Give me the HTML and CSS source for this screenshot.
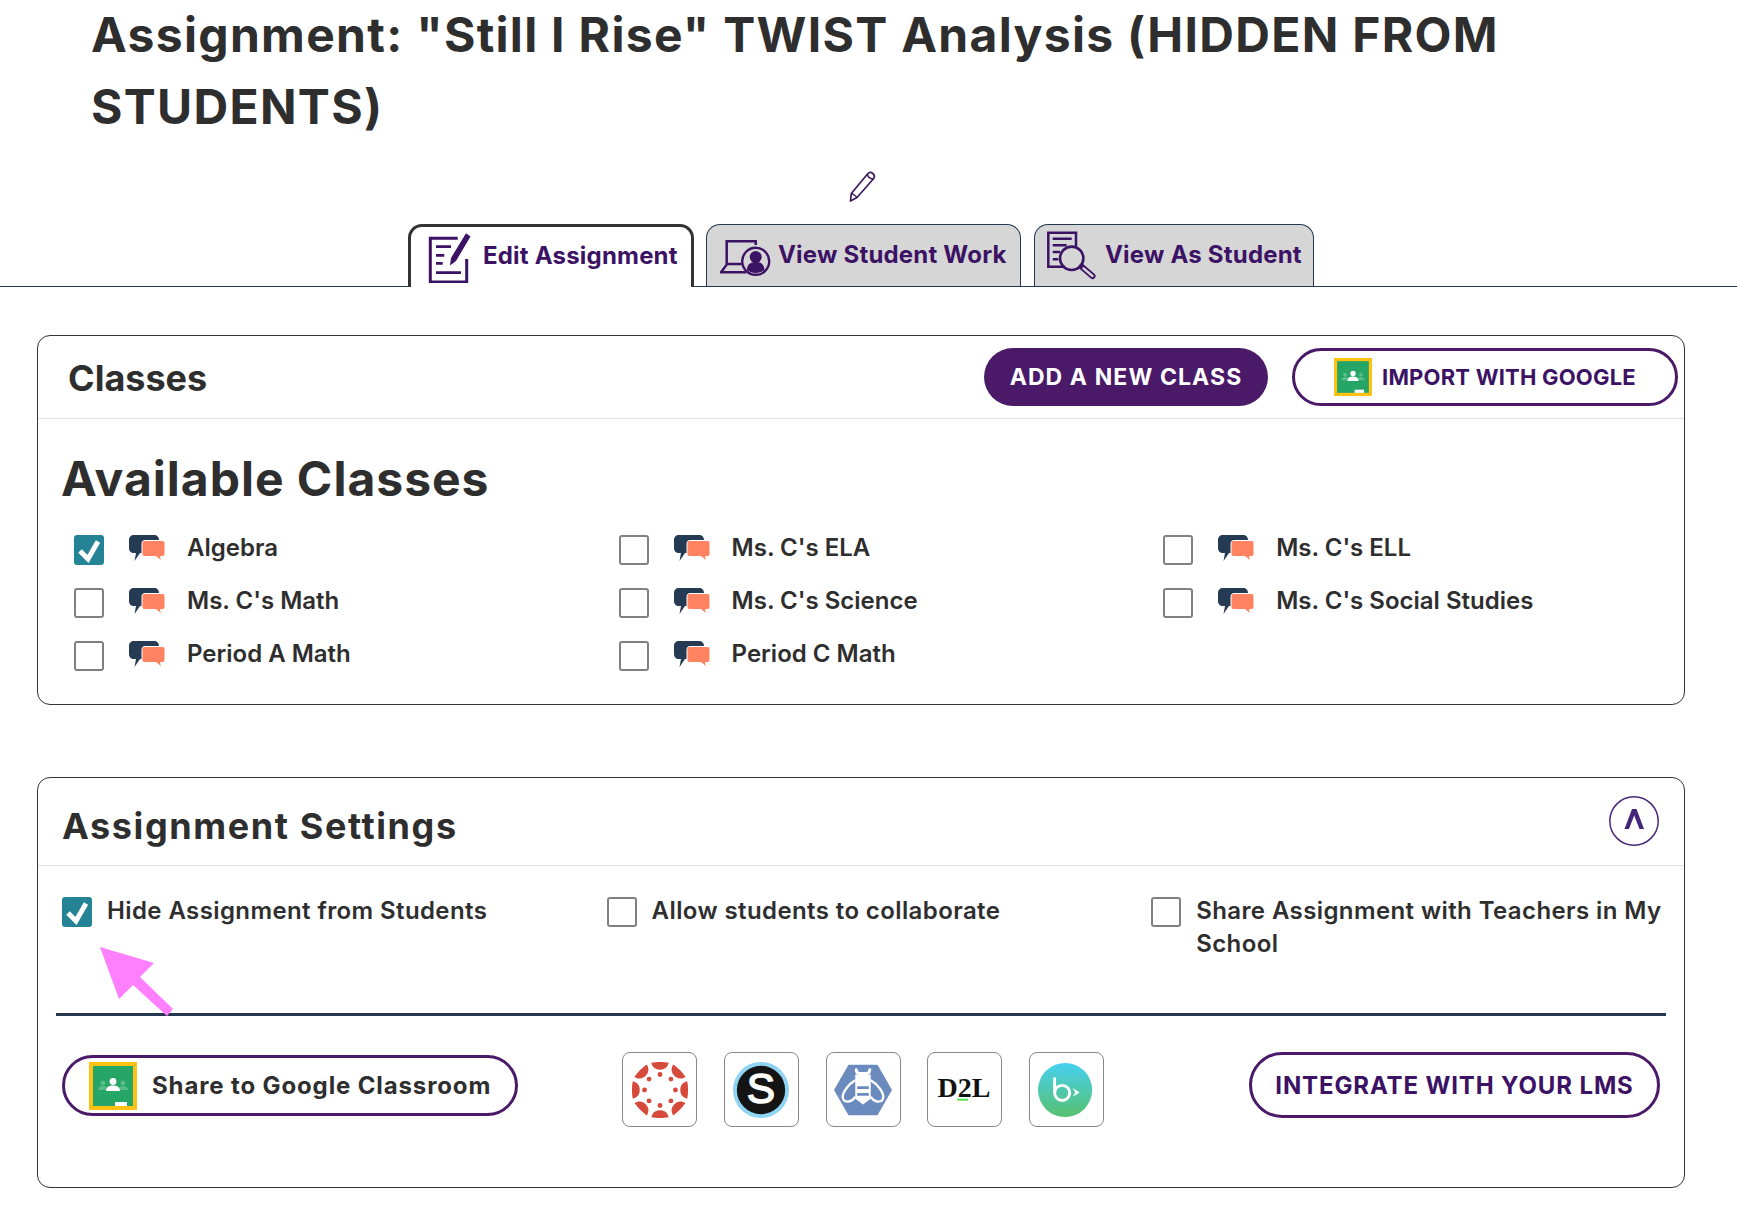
FILE: index.html
```html
<!DOCTYPE html>
<html lang="en">
<head>
<meta charset="utf-8">
<title>Assignment</title>
<link rel="stylesheet" href="styles.css">
</head>
<body>
<svg class="defs" width="0" height="0" aria-hidden="true">
  <defs>
    <symbol id="gc" viewBox="0 0 48 48">
      <rect width="48" height="48" fill="#ffc112"/>
      <rect x="4" y="4" width="40" height="40" fill="#25a667"/>
      <circle cx="14" cy="21" r="2.400" fill="#57bb8a"/>
      <circle cx="34" cy="21" r="2.400" fill="#57bb8a"/>
      <path d="M9 28c0-3 3-4 5-4s5 1 5 4zM29 28c0-3 3-4 5-4s5 1 5 4z" fill="#57bb8a"/>
      <circle cx="24" cy="19.500" r="3.400" fill="#fff"/>
      <path d="M17 29c0-4.500 4-5.500 7-5.500s7 1 7 5.500z" fill="#fff"/>
      <rect x="26" y="40" width="12" height="4" fill="#fff"/>
    </symbol>
    <symbol id="chat" viewBox="0 0 38 30">
      <path d="M5 0h20c3 0 5 2 5 5v8c0 3-2 5-5 5H11l-5.500 8 1.500-8H5c-3 0-5-2-5-5V5c0-3 2-5 5-5z" fill="#243b53"/>
      <path d="M16 5.500h17c2 0 3 1 3 3v10c0 2-1 3-3 3h-1.500l1 4.500-5.500-4.500H16c-2 0-3-1-3-3V8.500c0-2 1-3 3-3z" fill="#ff8360" stroke="#fff" stroke-width="1"/>
    </symbol>
    <symbol id="tick" viewBox="0 0 30 30">
      <rect width="30" height="30" rx="3" fill="#248496"/>
      <path d="M6 16l8 8L24 6.500" fill="none" stroke="#fff" stroke-width="5"/>
    </symbol>
    <symbol id="wedge" viewBox="0 0 60 60">
      <path d="M21 1.800C26 .7 34 .7 39 1.800 37.500 7 34.500 9 30 9s-7.500-2-9-7.200z"/>
    </symbol>
  </defs>
</svg>

<h1 class="title">Assignment: "Still I Rise" TWIST Analysis (HIDDEN FROM STUDENTS)</h1>

<div class="pencil-row">
  <svg class="pencil" viewBox="0 0 30 32" aria-hidden="true">
    <path d="M2.500 30l.8-7.500L19.500 3c1.500-1.700 3.700-1.800 5.300-.5s2 3.500.7 5.300L9 26.500z" fill="#fff" stroke="#3c1a5b" stroke-width="1.700" stroke-linejoin="round"/>
    <path d="M19.500 3c-.4 2.500 2.500 5 6 4.800" fill="none" stroke="#3c1a5b" stroke-width="1.500"/>
    <path d="M3.300 22.500c1.500.2 4.700 2.500 5.700 4" fill="none" stroke="#3c1a5b" stroke-width="1.500"/>
  </svg>
</div>

<nav class="tabs">
  <a class="tab tab-active">
    <svg class="tab-icon-edit" viewBox="0 0 43 52" aria-hidden="true">
      <path d="M29.700 7.300H2.300V51h36.400V28" fill="none" stroke="#3c1265" stroke-width="3"/>
      <path d="M8 15.700h15M8 24.300h8.300M8 32.300h6.700M8 41.700h25" stroke="#3c1265" stroke-width="2.800" fill="none"/>
      <path d="M38 2.300l4.500 3.200L28 30l-6 4.500 1-7.500z" fill="#3c1265"/>
    </svg>
    <span>Edit Assignment</span>
  </a>
  <a class="tab">
    <svg class="tab-icon-work" viewBox="0 0 55 45" aria-hidden="true">
      <path d="M35.700 12V8.300H6.700V31.700L1 39.300h25M6.700 31h15" fill="none" stroke="#3c1265" stroke-width="2.500"/>
      <circle cx="35.700" cy="28.300" r="13.500" fill="none" stroke="#3c1265" stroke-width="2.400"/>
      <circle cx="35.700" cy="24" r="6" fill="#3c1265"/>
      <path d="M27 37c0-6 4-8 8.700-8s8.700 2 8.700 8c-2.500 2-5.500 3-8.700 3s-6.200-1-8.700-3z" fill="#3c1265"/>
    </svg>
    <span>View Student Work</span>
  </a>
  <a class="tab">
    <svg class="tab-icon-view" viewBox="0 0 50 50" aria-hidden="true">
      <path d="M19 35.700H2.300V1.700H30v14" fill="none" stroke="#3c1265" stroke-width="2.500"/>
      <path d="M6.700 7.700h19M6.700 14.300h14M6.700 21h7.300M6.700 28.300h5.600" stroke="#3c1265" stroke-width="2.500" fill="none"/>
      <circle cx="25.700" cy="27.300" r="11.700" fill="none" stroke="#3c1265" stroke-width="2.600"/>
      <path d="M35.700 35.700 46.500 45" stroke="#3c1265" stroke-width="6" stroke-linecap="round"/>
      <path d="M37.500 37.300 46.500 45" stroke="#d6d6d6" stroke-width="2.400" stroke-linecap="round"/>
    </svg>
    <span>View As Student</span>
  </a>
</nav>

<section class="card card-classes">
  <header class="card-head head-classes">
    <h2 class="head-title">Classes</h2>
    <div class="head-actions">
      <button class="btn btn-fill">ADD A NEW CLASS</button>
      <button class="btn btn-line"><svg class="gc-small"><use href="#gc"/></svg>IMPORT WITH GOOGLE</button>
    </div>
  </header>
  <div class="classes-body">
    <h3 class="available">Available Classes</h3>
    <ul class="class-grid">
      <li class="class-item"><svg class="box"><use href="#tick"/></svg><svg class="chat"><use href="#chat"/></svg><span>Algebra</span></li>
      <li class="class-item"><i class="box empty"></i><svg class="chat"><use href="#chat"/></svg><span>Ms. C's ELA</span></li>
      <li class="class-item"><i class="box empty"></i><svg class="chat"><use href="#chat"/></svg><span>Ms. C's ELL</span></li>
      <li class="class-item"><i class="box empty"></i><svg class="chat"><use href="#chat"/></svg><span>Ms. C's Math</span></li>
      <li class="class-item"><i class="box empty"></i><svg class="chat"><use href="#chat"/></svg><span>Ms. C's Science</span></li>
      <li class="class-item"><i class="box empty"></i><svg class="chat"><use href="#chat"/></svg><span>Ms. C's Social Studies</span></li>
      <li class="class-item"><i class="box empty"></i><svg class="chat"><use href="#chat"/></svg><span>Period A Math</span></li>
      <li class="class-item"><i class="box empty"></i><svg class="chat"><use href="#chat"/></svg><span>Period C Math</span></li>
    </ul>
  </div>
</section>

<section class="card card-settings">
  <header class="card-head head-settings">
    <h2 class="head-title head-title-wide">Assignment Settings</h2>
    <svg class="collapse" viewBox="0 0 50 50" aria-hidden="true">
      <circle cx="25" cy="25" r="24.200" fill="#fff" stroke="#4a2a7c" stroke-width="1.500"/>
      <path d="M15.500 33 23 13h4.500L35 33h-4.500L25.200 19.500 20 33z" fill="#43267b"/>
    </svg>
  </header>
  <div class="options">
    <label class="option"><svg class="box"><use href="#tick"/></svg><span>Hide Assignment from Students</span></label>
    <label class="option"><i class="box empty"></i><span>Allow students to collaborate</span></label>
    <label class="option"><i class="box empty"></i><span>Share Assignment with Teachers in My School</span></label>
  </div>
  <div class="rule"></div>
  <div class="share-row">
    <button class="btn-share"><svg class="gc-large"><use href="#gc"/></svg><span>Share to Google Classroom</span></button>
    <div class="lms">
      <div class="lms-tile">
        <svg viewBox="0 0 60 60" class="lms-logo" aria-hidden="true">
          <g fill="#d64a3c">
            <use href="#wedge" width="60" height="60"/>
            <use href="#wedge" width="60" height="60" transform="rotate(45 30 30)"/>
            <use href="#wedge" width="60" height="60" transform="rotate(90 30 30)"/>
            <use href="#wedge" width="60" height="60" transform="rotate(135 30 30)"/>
            <use href="#wedge" width="60" height="60" transform="rotate(180 30 30)"/>
            <use href="#wedge" width="60" height="60" transform="rotate(225 30 30)"/>
            <use href="#wedge" width="60" height="60" transform="rotate(270 30 30)"/>
            <use href="#wedge" width="60" height="60" transform="rotate(315 30 30)"/>
            <circle cx="30" cy="14" r="2.500"/><circle cx="41.300" cy="18.700" r="2.500"/>
            <circle cx="46" cy="30" r="2.500"/><circle cx="41.300" cy="41.300" r="2.500"/>
            <circle cx="30" cy="46" r="2.500"/><circle cx="18.700" cy="41.300" r="2.500"/>
            <circle cx="14" cy="30" r="2.500"/><circle cx="18.700" cy="18.700" r="2.500"/>
          </g>
        </svg>
      </div>
      <div class="lms-tile">
        <svg viewBox="0 0 60 60" class="lms-logo" aria-hidden="true">
          <circle cx="30" cy="30" r="29" fill="#8fd4f2"/>
          <circle cx="30" cy="30" r="25" fill="#141414"/>
          <text x="30" y="43" class="logo-s">S</text>
        </svg>
      </div>
      <div class="lms-tile">
        <svg viewBox="0 0 60 60" class="lms-logo" aria-hidden="true">
          <path d="M15 4h30l15 26-15 26H15L0 30z" fill="#6b8abd"/>
          <path d="M23 9c0 3 2 4 4 4h6c2 0 4-1 4-4" fill="none" stroke="#fff" stroke-width="3" stroke-linecap="round"/>
          <path d="M22 14h16v25l-8 6-8-6z" fill="#fff"/>
          <path d="M24 26h12v3H24zM24 33h12v3H24z" fill="#6b8abd"/>
          <path d="M22 20C15 24 9 32 9 37c0 3 2 5 5 5s6-2 8-5M38 20c7 4 13 12 13 17 0 3-2 5-5 5s-6-2-8-5" fill="none" stroke="#fff" stroke-width="2.400"/>
        </svg>
      </div>
      <div class="lms-tile">
        <svg viewBox="0 0 60 60" class="lms-logo" aria-hidden="true">
          <text x="29" y="37" class="logo-d2l">D2L</text>
          <rect x="22" y="39" width="11" height="2" fill="#45e045"/>
        </svg>
      </div>
      <div class="lms-tile">
        <svg viewBox="0 0 60 60" class="lms-logo" aria-hidden="true">
          <defs><linearGradient id="bb" x1="0" y1="0" x2="0" y2="1"><stop offset="0" stop-color="#47d0f0"/><stop offset="1" stop-color="#57c06f"/></linearGradient></defs>
          <circle cx="28" cy="30" r="28" fill="url(#bb)"/>
          <circle cx="25" cy="33" r="7.800" fill="none" stroke="#fff" stroke-width="3"/>
          <path d="M17.200 17v16" stroke="#fff" stroke-width="3"/>
          <path d="M36 28l7 4.500-7 4.500 2.500-4.500z" fill="#fff"/>
        </svg>
      </div>
    </div>
    <button class="btn-lms">INTEGRATE WITH YOUR LMS</button>
  </div>
  <svg class="pink-arrow" viewBox="0 0 74 70" aria-hidden="true">
    <path d="M0 0 54 16 40 30 73 62 67 69 33 38 19 52z" fill="#ff80ff"/>
  </svg>
</section>
</body>
</html>
```
FILE: styles.css
```css
* { box-sizing: border-box; }
html, body { margin: 0; padding: 0; }
body {
  background: #fff;
  color: #2e2e2e;
  font-family: Inter, "Noto Sans", "Liberation Sans", sans-serif;
  width: 1737px;
  height: 1215px;
  overflow: hidden;
}
.defs { position: absolute; }
.title {
  margin: -1px 0 0;
  padding: 0 100px 0 91px;
  font-size: 48px;
  line-height: 72px;
  font-weight: 700;
  letter-spacing: 1.3px;
}
.pencil-row {
  display: flex;
  justify-content: center;
  padding: 28px 12px 0 0;
  height: 82px;
}
.pencil { width: 30px; height: 32px; }
.tabs {
  display: flex;
  align-items: flex-end;
  gap: 13px;
  height: 62px;
  padding-left: 408px;
  border-bottom: 1px solid #24394f;
}
.tab {
  display: flex;
  align-items: center;
  height: 62px;
  padding-bottom: 2px;
  border: 1px solid #24394f;
  border-bottom: 0;
  border-radius: 14px 14px 0 0;
  background: #d6d6d6;
  color: #3c1265;
  font-size: 24px;
  font-weight: 700;
  letter-spacing: 0.2px;
  white-space: nowrap;
}
.tab svg { flex: none; margin-top: 2px; }
.tab:nth-child(2) { width: 315px; padding-left: 13px; }
.tab:nth-child(3) { width: 280px; padding-left: 11px; }
.tab-active {
  width: 286px;
  height: 63px;
  margin-bottom: -1px;
  margin-right: -1px;
  padding-left: 17px;
  padding-bottom: 4px;
  border: 3px solid #333;
  border-bottom: 0;
  background: #fff;
}
.tab-icon-edit { width: 43px; height: 52px; margin-right: 12px; }
.tab-icon-work { width: 55px; height: 45px; margin-right: 3px; }
.tab-icon-view { width: 50px; height: 50px; margin-right: 9px; }
.tab-active svg { margin-top: 4px; }
.card {
  position: relative;
  width: 1648px;
  margin-left: 37px;
  border: 1px solid #333;
  border-radius: 13px;
  background: #fff;
}
.card-classes { height: 370px; margin-top: 48px; }
.card-settings { height: 411px; margin-top: 72px; }
.card-head {
  display: flex;
  align-items: center;
  justify-content: space-between;
  border-bottom: 1px solid #e2e2e2;
}
.head-classes { height: 83px; padding: 2px 6px 0 30px; }
.head-settings { height: 88px; padding: 8px 25px 0 24px; }
.head-title { margin: 0; font-size: 36px; line-height: 44px; font-weight: 700; }
.head-title-wide { letter-spacing: 1.6px; }
.head-actions { display: flex; gap: 24px; align-items: center; margin-top: -2px; }
.btn {
  display: flex;
  align-items: center;
  justify-content: center;
  height: 58px;
  border-radius: 29px;
  font-family: inherit;
  white-space: nowrap;
}
.btn-fill { width: 284px; background: #4a1a68; border: 0; color: #fff; font-size: 23px; font-weight: 700; letter-spacing: 1.1px; }
.btn-line { width: 386px; background: #fff; border: 3px solid #4a1a68; color: #3c1265; gap: 10px; font-size: 22px; font-weight: 700; letter-spacing: 0.2px; }
.gc-small { width: 38px; height: 38px; }
.classes-body { padding: 0 23px; }
.available { margin: 0; padding-top: 31px; font-size: 48px; line-height: 58px; font-weight: 700; letter-spacing: 1px; }
.class-grid {
  display: grid;
  grid-template-columns: repeat(3, 544.6px);
  grid-auto-rows: 53px;
  margin: 13px 0 0;
  padding: 0 0 0 13px;
  list-style: none;
}
.class-item { display: flex; align-items: center; font-size: 24px; font-weight: 600; }
.class-item .box { margin-top: 4px; }
.box { display: block; flex: none; width: 30px; height: 30px; }
.empty { border: 2px solid #808080; border-radius: 3px; background: #fff; }
.chat { width: 38px; height: 30px; margin: 4px 20px 0 25px; flex: none; }
.collapse { width: 50px; height: 50px; margin-top: -10px; }
.options {
  display: grid;
  grid-template-columns: repeat(3, 544.6px);
  height: 147px;
  padding: 28px 0 0 24px;
}
.option { display: flex; gap: 15px; font-size: 24px; line-height: 33px; font-weight: 600; letter-spacing: 0.4px; }
.option .box { margin-top: 3px; }
.rule { height: 3px; margin: 0 18px; background: #24394f; }
.share-row {
  display: flex;
  align-items: flex-start;
  padding: 36px 24px 0 24px;
  position: relative;
}
.btn-share {
  display: flex;
  align-items: center;
  width: 456px;
  height: 61px;
  margin-top: 3px;
  padding: 0 0 0 24px;
  gap: 15px;
  background: #fff;
  border: 3px solid #4a1a68;
  border-radius: 31px;
  font-family: inherit;
  font-size: 24px;
  font-weight: 700;
  letter-spacing: 0.87px;
  color: #2e2e2e;
  white-space: nowrap;
}
.gc-large { width: 48px; height: 48px; flex: none; }
.lms { display: flex; gap: 26.75px; margin-left: 104px; }
.lms-tile {
  display: flex;
  align-items: center;
  justify-content: center;
  width: 75px;
  height: 75px;
  border: 1px solid #888;
  border-radius: 8px;
}
.lms-logo { width: 58px; height: 58px; }
.logo-s { font-family: "Liberation Sans", sans-serif; font-size: 44px; font-weight: 400; fill: #fff; text-anchor: middle; stroke: #fff; stroke-width: 1.5px; }
.logo-d2l { font-family: "Liberation Serif", serif; font-size: 29px; font-weight: 700; fill: #111; text-anchor: middle; }
.btn-lms {
  width: 411px;
  height: 66px;
  margin-left: auto;
  background: #fff;
  border: 3px solid #4a1a68;
  border-radius: 33px;
  font-family: inherit;
  font-size: 24px;
  font-weight: 700;
  letter-spacing: 0.87px;
  color: #3c1265;
  white-space: nowrap;
}
.pink-arrow { position: absolute; left: 62px; top: 169px; width: 74px; height: 70px; }
```
